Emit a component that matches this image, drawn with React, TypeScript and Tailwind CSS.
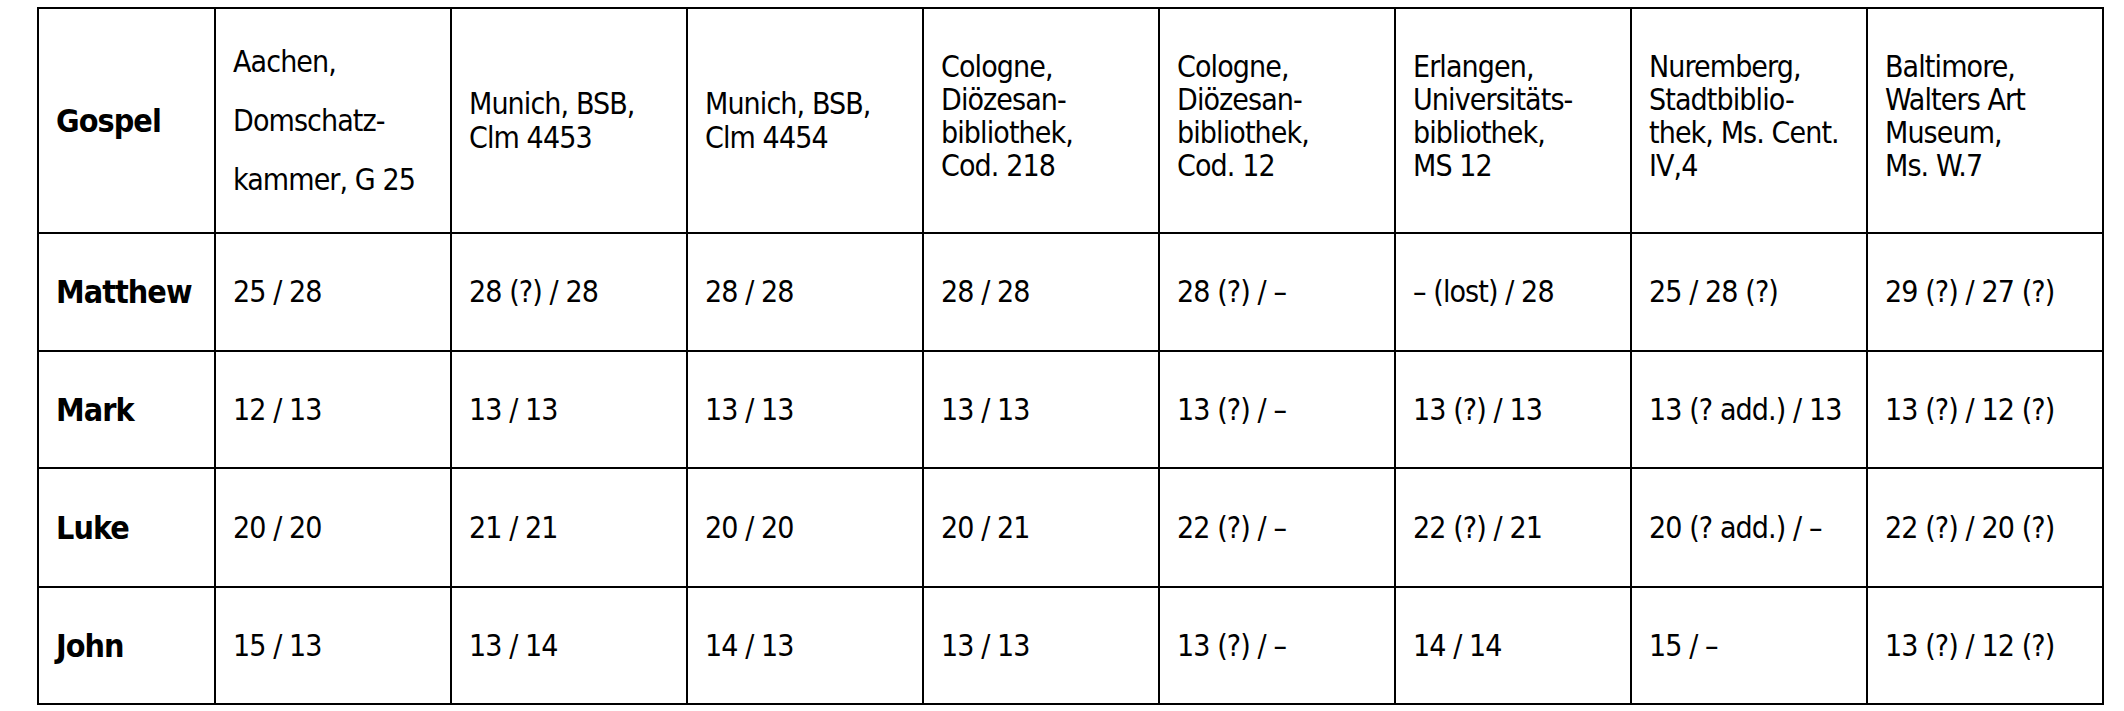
import React from "react";

const headers = [
  { lines: ["Aachen,", "Domschatz-", "kammer, G 25"], cls: "leading-[59px]" },
  { lines: ["Munich, BSB,", "Clm 4453"], cls: "leading-[34px]" },
  { lines: ["Munich, BSB,", "Clm 4454"], cls: "leading-[34px]" },
  { lines: ["Cologne,", "Diözesan-", "bibliothek,", "Cod. 218"], cls: "leading-[33px] pb-[10px]" },
  { lines: ["Cologne,", "Diözesan-", "bibliothek,", "Cod. 12"], cls: "leading-[33px] pb-[10px]" },
  { lines: ["Erlangen,", "Universitäts-", "bibliothek,", "MS 12"], cls: "leading-[33px] pb-[10px]" },
  { lines: ["Nuremberg,", "Stadtbiblio-", "thek, Ms. Cent.", "IV,4"], cls: "leading-[33px] pb-[10px]" },
  { lines: ["Baltimore,", "Walters Art", "Museum,", "Ms. W.7"], cls: "leading-[33px] pb-[10px]" },
];

const rows = [
  {
    gospel: "Matthew",
    height: "h-[118px]",
    cells: ["25 / 28", "28 (?) / 28", "28 / 28", "28 / 28", "28 (?) / –", "– (lost) / 28", "25 / 28 (?)", "29 (?) / 27 (?)"],
  },
  {
    gospel: "Mark",
    height: "h-[117px]",
    cells: ["12 / 13", "13 / 13", "13 / 13", "13 / 13", "13 (?) / –", "13 (?) / 13", "13 (? add.) / 13", "13 (?) / 12 (?)"],
  },
  {
    gospel: "Luke",
    height: "h-[119px]",
    cells: ["20 / 20", "21 / 21", "20 / 20", "20 / 21", "22 (?) / –", "22 (?) / 21", "20 (? add.) / –", "22 (?) / 20 (?)"],
  },
  {
    gospel: "John",
    height: "h-[117px]",
    cells: ["15 / 13", "13 / 14", "14 / 13", "13 / 13", "13 (?) / –", "14 / 14", "15 / –", "13 (?) / 12 (?)"],
  },
];

const font = "font-['DejaVu_Sans_Condensed','Liberation_Sans',sans-serif]";

export default function App() {
  return (
    <div className={`min-h-screen bg-white text-black ${font} pt-[7px] pl-[37px]`}>
      <table className="table-fixed border-collapse w-[2065px]">
        <colgroup>
          <col className="w-[177px]" />
          {headers.map((_, i) => (
            <col key={i} className="w-[236px]" />
          ))}
        </colgroup>
        <thead>
          <tr className="h-[225px]">
            <th className="border-2 border-black pl-[17px] text-left align-middle font-bold text-[32px] tracking-[-0.03em] leading-[36px]">
              Gospel
            </th>
            {headers.map((h, i) => (
              <th
                key={i}
                className={`border-2 border-black pl-[17px] pr-1 text-left align-middle font-normal text-[30px] tracking-[-0.03em] ${h.cls}`}
              >
                {h.lines.map((l, j) => (
                  <div key={j} className="whitespace-nowrap">{l}</div>
                ))}
              </th>
            ))}
          </tr>
        </thead>
        <tbody>
          {rows.map((r) => (
            <tr key={r.gospel} className={r.height}>
              <td className="border-2 border-black pl-[17px] align-middle font-bold text-[32px] tracking-[-0.03em] leading-[36px]">
                {r.gospel}
              </td>
              {r.cells.map((c, i) => (
                <td
                  key={i}
                  className="border-2 border-black pl-[17px] align-middle text-[30px] tracking-[-0.03em] leading-[34px] whitespace-nowrap"
                >
                  {c}
                </td>
              ))}
            </tr>
          ))}
        </tbody>
      </table>
    </div>
  );
}
